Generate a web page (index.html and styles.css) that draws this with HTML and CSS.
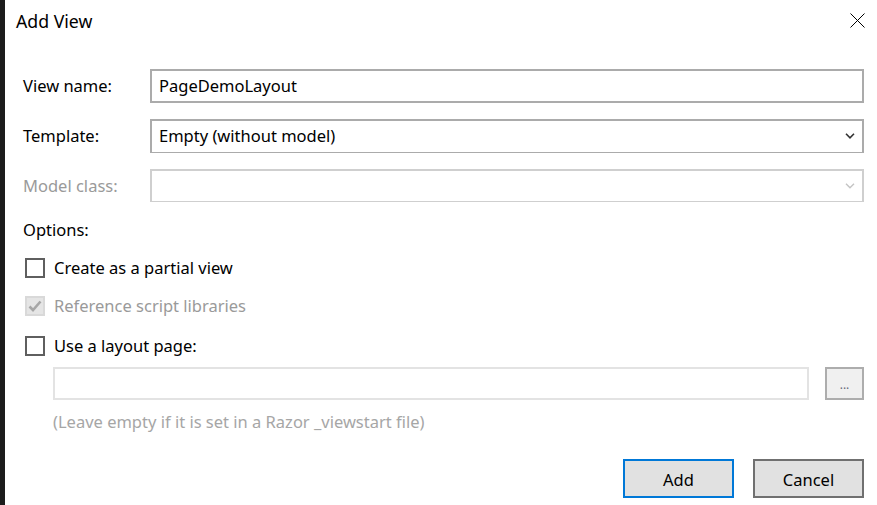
FILE: index.html
```html
<!DOCTYPE html>
<html>
<head>
<meta charset="utf-8">
<link rel="stylesheet" href="styles.css">
</head>
<body>
<div class="window">
  <div class="strip"></div>
  <div class="dialog">
    <div class="titlebar">
      <span class="title">Add View</span>
      <svg class="close" width="15" height="15" viewBox="0 0 15 15"><path d="M0.5 0.5L14.5 14.5M14.5 0.5L0.5 14.5" stroke="#000" stroke-width="1" fill="none"/></svg>
    </div>
    <div class="form">
      <label class="lbl">View name:</label>
      <div class="textbox">PageDemoLayout</div>
      <label class="lbl">Template:</label>
      <div class="combo">
        <span class="combo-text">Empty (without model)</span>
        <span class="combo-btn"><svg width="10" height="6" viewBox="0 0 10 6"><path d="M1 0.8L5 4.8L9 0.8" stroke="#333" stroke-width="1.6" fill="none"/></svg></span>
      </div>
      <label class="lbl disabled">Model class:</label>
      <div class="combo combo-disabled">
        <span class="combo-text"></span>
        <span class="combo-btn"><svg width="10" height="6" viewBox="0 0 10 6"><path d="M1 0.8L5 4.8L9 0.8" stroke="#c4c4c4" stroke-width="1.4" fill="none"/></svg></span>
      </div>
    </div>
    <div class="options">Options:</div>
    <div class="check-row row1"><span class="box"></span><span>Create as a partial view</span></div>
    <div class="check-row row2 disabled"><span class="box box-checked"><svg width="14" height="12" viewBox="0 0 14 12"><path d="M1.5 6.5L5 10L12.5 1.5" stroke="#a6a6a6" stroke-width="2.6" fill="none"/></svg></span><span>Reference script libraries</span></div>
    <div class="check-row row3"><span class="box"></span><span>Use a layout page:</span></div>
    <div class="layout-row">
      <div class="layout-box"></div>
      <div class="browse">...</div>
    </div>
    <div class="hint">(Leave empty if it is set in a Razor _viewstart file)</div>
    <div class="buttons">
      <div class="btn btn-default">Add</div>
      <div class="btn">Cancel</div>
    </div>
  </div>
</div>
</body>
</html>
```
FILE: styles.css
```css
html, body {
  margin: 0;
  padding: 0;
  background: #fff;
}
body {
  font-family: "Noto Sans", "Open Sans", sans-serif;
  font-size: 16.5px;
  color: #000;
}
.window {
  display: flex;
  width: 877px;
  height: 505px;
  overflow: hidden;
}
.strip {
  width: 5px;
  background: #1c1c1c;
  flex: none;
}
.dialog {
  flex: 1;
  display: flex;
  flex-direction: column;
  padding: 0 13px 0 18px;
}
.titlebar {
  height: 69px;
  display: flex;
  align-items: flex-start;
  justify-content: space-between;
  margin-left: -7px;
}
.title {
  font-size: 17.7px;
  line-height: 20px;
  margin-top: 11px;
}
.close {
  margin-top: 13px;
  margin-right: -1px;
}
.form {
  display: grid;
  grid-template-columns: 127px 1fr;
  row-gap: 16px;
  align-items: center;
}
.lbl {
  line-height: 20px;
}
.lbl.disabled, .disabled {
  color: #9a9a9a;
}
.textbox {
  height: 34px;
  box-sizing: border-box;
  border: 2px solid #ababab;
  padding: 0 7px;
  line-height: 30px;
}
.combo {
  height: 34px;
  box-sizing: border-box;
  border: 2px solid #ababab;
  border-bottom-width: 1px;
  display: flex;
}
.combo-text {
  flex: 1;
  padding: 0 7px;
  line-height: 30px;
}
.combo-btn {
  width: 25px;
  display: flex;
  align-items: center;
  justify-content: center;
  box-shadow: 0 1px 0 #ababab;
  padding-bottom: 1px;
}
.combo-disabled {
  border-color: #cfcfcf;
  height: 33px;
}
.combo-disabled .combo-btn {
  box-shadow: 0 1px 0 #cfcfcf;
}
.options {
  margin-top: 18px;
  line-height: 20px;
}
.check-row {
  display: flex;
  align-items: center;
  gap: 9px;
  line-height: 20px;
  margin-left: 2px;
}
.row1 { margin-top: 18px; }
.row2 { margin-top: 18px; }
.row3 { margin-top: 20px; }
.box {
  width: 20px;
  height: 20px;
  box-sizing: border-box;
  border: 2px solid #5f5f5f;
  background: #fff;
  display: flex;
  align-items: center;
  justify-content: center;
}
.box-checked {
  border-color: #d9d9d9;
  background: #e5e5e5;
}
.layout-row {
  display: flex;
  gap: 16px;
  margin-top: 11px;
  margin-left: 30px;
  height: 33px;
}
.layout-box {
  flex: 1;
  box-sizing: border-box;
  border: 2px solid #e3e3e3;
}
.browse {
  width: 39px;
  box-sizing: border-box;
  border: 2px solid #adadad;
  background: #f0f0f0;
  text-align: center;
  font-size: 12px;
  line-height: 31px;
  color: #6a6a7a;
}
.hint {
  margin-top: 12px;
  margin-left: 30px;
  line-height: 20px;
  color: #a6a6a6;
}
.buttons {
  display: flex;
  justify-content: flex-end;
  gap: 19px;
  margin-top: 27px;
}
.btn {
  width: 111px;
  height: 39px;
  box-sizing: border-box;
  border: 2px solid #707070;
  background: #e1e1e1;
  display: flex;
  align-items: center;
  justify-content: center;
  padding-top: 2px;
}
.btn-default {
  border-color: #0078d7;
}
```
